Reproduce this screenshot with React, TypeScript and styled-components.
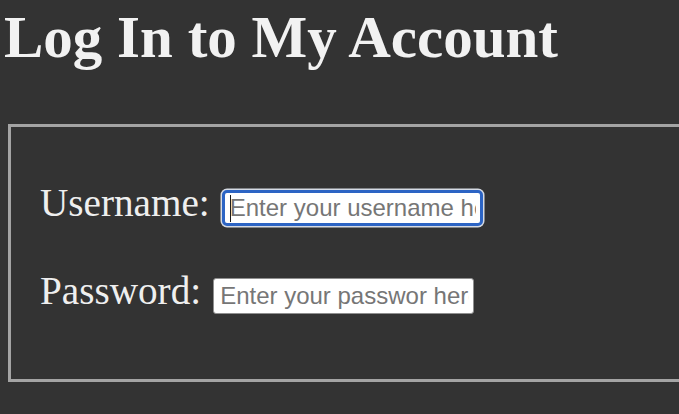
import React from 'react';
import styled, { createGlobalStyle } from 'styled-components';

const GlobalStyle = createGlobalStyle`
  html, body {
    margin: 0;
    padding: 0;
    background: #333333;
    overflow: hidden;
  }
  body {
    font-family: "Liberation Serif", "Times New Roman", serif;
    color: #efefef;
  }
`;

const Page = styled.main({
  padding: '8px 0 0 0',
  width: '679px',
  height: '414px',
  boxSizing: 'border-box',
});

const Title = styled.h1({
  margin: '0 0 58px 0',
  paddingLeft: '4px',
  fontSize: '59px',
  lineHeight: '58px',
  fontWeight: 700,
  color: '#f2f2f2',
  whiteSpace: 'nowrap',
});

const Panel = styled.fieldset({
  margin: '0 0 0 8px',
  width: '760px',
  boxSizing: 'border-box',
  border: '3px solid #a4a4a4',
  padding: '54px 0 65px 29px',
  display: 'flex',
  flexDirection: 'column',
  gap: '43px',
});

const Row = styled.div({
  display: 'flex',
  alignItems: 'baseline',
  gap: '12px',
});

const Label = styled.label({
  fontSize: '39.2px',
  lineHeight: '44px',
  color: '#efefef',
  whiteSpace: 'nowrap',
});

const Field = styled.span({
  position: 'relative',
  display: 'inline-flex',
});

const Caret = styled.span({
  position: 'absolute',
  left: '8px',
  top: '5px',
  width: '1.5px',
  height: '27px',
  background: '#1c1c1c',
});

const Input = styled.input<{ $focused?: boolean }>((props) => ({
  width: '261px',
  height: '36px',
  boxSizing: 'border-box',
  margin: 0,
  padding: props.$focused ? '0 4px 0 5px' : '0 4px 0 6px',
  fontFamily: '"Liberation Sans", Arial, sans-serif',
  fontSize: '24px',
  color: '#222',
  background: '#ffffff',
  borderRadius: props.$focused ? '5px' : '3px',
  border: props.$focused ? '3px solid #2c64c4' : '1px solid #8f8f8f',
  boxShadow: props.$focused ? '0 0 0 1.5px #d6dbe4' : 'none',
  outline: 'none',
  '&::placeholder': {
    color: '#767676',
    opacity: 1,
  },
}));

export default function App() {
  return (
    <>
      <GlobalStyle />
      <Page>
        <Title>Log In to My Account</Title>
        <form onSubmit={(e) => e.preventDefault()}>
          <Panel>
            <Row>
              <Label htmlFor="username">Username:</Label>
              <Field>
                <Input
                  id="username"
                  type="text"
                  placeholder="Enter your username here"
                  $focused
                />
                <Caret />
              </Field>
            </Row>
            <Row>
              <Label htmlFor="password">Password:</Label>
              <Field>
                <Input id="password" type="password" placeholder="Enter your passwor here" />
              </Field>
            </Row>
          </Panel>
        </form>
      </Page>
    </>
  );
}
